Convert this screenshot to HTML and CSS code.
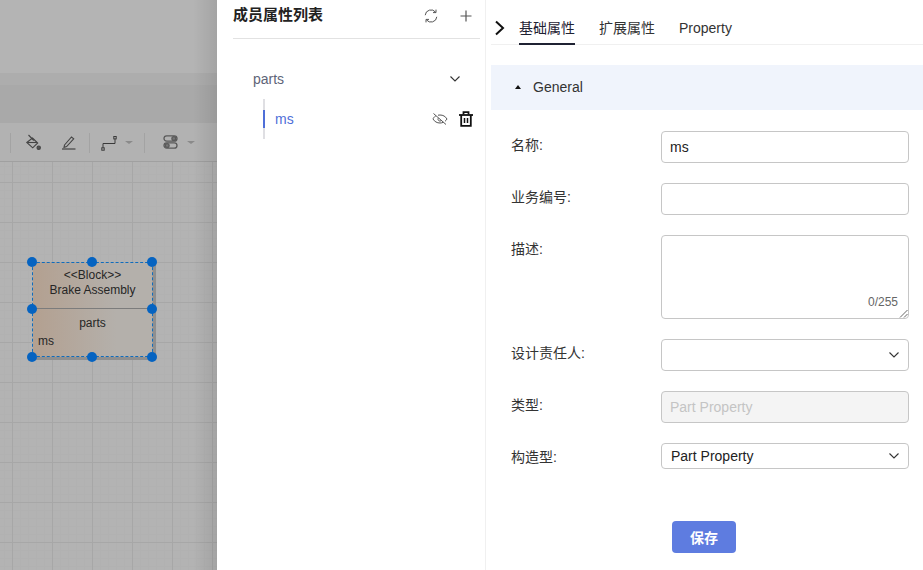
FILE: index.html
```html
<!DOCTYPE html>
<html lang="zh">
<head>
<meta charset="utf-8">
<title>成员属性列表</title>
<link rel="stylesheet" href="styles.css">
</head>
<body>
<div class="app">
  <section class="editor">
    <div class="band-top"></div>
    <div class="band-mid"></div>
    <div class="band-low"></div>
    <div class="toolbar">
      <span class="sep sep-first"></span>
      <svg class="tool tool-fill" width="15" height="16" viewBox="0 0 15 16" fill="none" stroke="#444" stroke-width="1.100"><path d="M.8 8.500 6.500 4l5.200 5-5 4.800z"/><path d="M2.500 1 7.800 6.500"/><path d="M1.500 8.500h9.500"/><circle cx="12.700" cy="13.700" r="1.700" fill="#555"/></svg>
      <svg class="tool tool-pen" width="15" height="15" viewBox="0 0 15 15" fill="none" stroke="#444" stroke-width="1.100"><path d="m3.500 10 7-8 2.200 1.800L5.600 11.600l-2.600.8z"/><path d="M1 14h13.500" stroke-width="1.200"/></svg>
      <span class="sep sep-a"></span>
      <svg class="tool tool-route" width="16" height="16" viewBox="0 0 16 16" fill="none" stroke="#3a3a3a" stroke-width="1"><rect x=".8" y="11.800" width="2.400" height="2.400"/><rect x="12.800" y=".5" width="2.400" height="2.400"/><path d="M2 11.800V7.500H14V3"/></svg>
      <span class="caret caret-a"></span>
      <span class="sep sep-b"></span>
      <svg class="tool tool-toggle" width="15" height="14" viewBox="0 0 15 14" fill="none" stroke="#5a5a5a" stroke-width="1.300"><rect x="1" y=".8" width="13" height="5.400" rx="2.700"/><rect x="1" y="7.800" width="13" height="5.400" rx="2.700"/><circle cx="10.800" cy="3.500" r="1.900" fill="#777"/><circle cx="4.200" cy="10.500" r="1.900" fill="#777"/></svg>
      <span class="caret caret-b"></span>
    </div>
    <div class="canvas">
      <div class="node">
        <div class="node-head">
          <span class="node-line">&lt;&lt;Block&gt;&gt;</span>
          <span class="node-line">Brake Assembly</span>
        </div>
        <div class="node-body">
          <span class="node-parts">parts</span>
          <span class="node-ms">ms</span>
        </div>
        <i class="handle h-tl"></i><i class="handle h-tm"></i><i class="handle h-tr"></i>
        <i class="handle h-ml"></i><i class="handle h-mr"></i>
        <i class="handle h-bl"></i><i class="handle h-bm"></i><i class="handle h-br"></i>
      </div>
    </div>
    <div class="edge-shade"></div>
  </section>

  <aside class="members">
    <header class="members-head">
      <h2 class="members-title">成员属性列表</h2>
      <svg class="head-icon icon-refresh" width="16" height="16" viewBox="0 0 16 16" fill="none" stroke="#555" stroke-width="1"><path d="M2.200 7.200A5.800 5.800 0 0 1 12.600 4.200"/><path d="M13.800 8.800A5.800 5.800 0 0 1 3.400 11.800"/><path d="M13 1.600v3h-3"/><path d="M3 14.400v-3h3"/></svg>
      <svg class="head-icon icon-plus" width="14" height="14" viewBox="0 0 14 14" fill="none" stroke="#555" stroke-width="1.200"><path d="M7 1.500v11M1.500 7h11"/></svg>
    </header>
    <div class="group-row">
      <span class="group-name">parts</span>
      <svg class="chev" width="12" height="8" viewBox="0 0 12 8" fill="none" stroke="#333" stroke-width="1.100"><path d="m1.500 1.500 4.500 4.500 4.500-4.500"/></svg>
    </div>
    <div class="group-items">
      <div class="item-row">
        <span class="item-name">ms</span>
        <svg class="item-eye" width="16" height="14" viewBox="0 0 16 14" fill="none" stroke="#555" stroke-width="1"><path d="M3.800 3.900C1.900 5 1.200 6.300 1 7c1.600 2.700 4 4 7 4 1.200 0 2.300-.2 3.300-.7"/><path d="M6 3.200C6.600 3.100 7.300 3 8 3c3 0 5.400 1.300 7 4-.5.900-1.200 1.700-2 2.300"/><path d="M1.500 1.500 14 12.500"/><path d="M6.200 6.200a2 2 0 0 0 2.800 2.600"/></svg>
        <svg class="item-trash" width="14" height="16" viewBox="0 0 14 16" fill="none" stroke="#111" stroke-width="1.800"><path d="M0 4h14"/><path d="M4.500 3.500V1.200h5V3.500"/><path d="M2.200 4v10.800h9.600V4"/><path d="M5.500 7v5M8.500 7v5" stroke-width="1.500"/></svg>
      </div>
    </div>
  </aside>

  <main class="props">
    <nav class="tabs">
      <svg class="collapse" width="12" height="16" viewBox="0 0 12 16" fill="none" stroke="#111" stroke-width="2"><path d="m2 1.500 7 6.500-7 6.500"/></svg>
      <span class="tab tab-active">基础属性</span>
      <span class="tab">扩展属性</span>
      <span class="tab">Property</span>
    </nav>
    <div class="section-bar">
      <span class="tri"></span>
      <span class="section-name">General</span>
    </div>
    <form class="form">
      <div class="field">
        <label class="label">名称:</label>
        <div class="box box-h">ms</div>
      </div>
      <div class="field">
        <label class="label">业务编号:</label>
        <div class="box box-h"></div>
      </div>
      <div class="field">
        <label class="label">描述:</label>
        <div class="box box-area">
          <span class="counter">0/255</span>
          <svg class="grip" width="9" height="9" viewBox="0 0 9 9" fill="none" stroke="#666" stroke-width="1"><path d="M1 8.500 8.500 1M5 8.500 8.500 5"/></svg>
        </div>
      </div>
      <div class="field">
        <label class="label">设计责任人:</label>
        <div class="box box-sel">
          <svg class="chev" width="12" height="8" viewBox="0 0 12 8" fill="none" stroke="#333" stroke-width="1.100"><path d="m1.500 1.500 4.500 4.500 4.500-4.500"/></svg>
        </div>
      </div>
      <div class="field">
        <label class="label">类型:</label>
        <div class="box box-h box-off">Part Property</div>
      </div>
      <div class="field">
        <label class="label">构造型:</label>
        <div class="box box-sel box-short">Part Property
          <svg class="chev" width="12" height="8" viewBox="0 0 12 8" fill="none" stroke="#333" stroke-width="1.100"><path d="m1.500 1.500 4.500 4.500 4.500-4.500"/></svg>
        </div>
      </div>
    </form>
    <div class="actions"><button class="save" type="button">保存</button></div>
  </main>
</div>
</body>
</html>
```
FILE: styles.css
```css
* { box-sizing: border-box; }
html, body { margin: 0; height: 100%; overflow: hidden; background: #fff; }
body { font-family: "Liberation Sans", "Noto Sans CJK SC", sans-serif; font-size: 14px; color: #222; }
.app { display: flex; width: 923px; height: 570px; }

/* dimmed editor */
.editor { position: relative; width: 217px; flex: none; display: flex; flex-direction: column; background: #b3b3b3; overflow: hidden; }
.band-top { height: 73px; background: #b4b4b4; }
.band-mid { height: 12px; background: #adadad; }
.band-low { height: 38px; background: #a9a9a9; }
.toolbar { position: relative; height: 39px; background: #b2b2b2; border-bottom: 1px solid #a0a0a0; }
.sep { position: absolute; top: 10px; width: 1px; height: 20px; background: #a3a3a3; }
.sep-first { left: 10px; }
.sep-a { left: 89px; }
.sep-b { left: 144px; }
.tool { position: absolute; }
.tool-fill { left: 26px; top: 11px; }
.tool-pen { left: 61px; top: 12px; }
.tool-route { left: 101px; top: 13px; }
.tool-toggle { left: 163px; top: 12px; }
.caret { position: absolute; top: 18px; border: 4px solid transparent; border-top: 3px solid #8a8a8a; border-bottom: 0; }
.caret-a { left: 125px; }
.caret-b { left: 187px; }
.canvas {
  position: relative; flex: 1;
  background-color: #b3b3b3;
  background-image:
    linear-gradient(#a7a7a7 1px, transparent 1px),
    linear-gradient(90deg, #a7a7a7 1px, transparent 1px),
    linear-gradient(#b1b1b1 1px, transparent 1px),
    linear-gradient(90deg, #b1b1b1 1px, transparent 1px);
  background-size: 40px 40px, 40px 40px, 8px 8px, 8px 8px;
  background-position: 0 20px, 12px 0, 0 4px, 4px 0;
}
.edge-shade { position: absolute; top: 0; right: 0; bottom: 0; width: 24px; background: linear-gradient(90deg, rgba(0,0,0,0), rgba(0,0,0,.09)); }

/* diagram node */
.node { position: absolute; left: 32px; top: 100px; width: 121px; height: 95px; border: 1px dashed #0f6cbd; background: linear-gradient(90deg, #b3a090, #b4b0ab 70%); box-shadow: 3px 3px 0 #8f8f8f; font-size: 12px; line-height: 14px; color: #262626; }
.node-head { height: 46px; padding-top: 5px; border-bottom: 1px solid #7c7c7c; display: flex; flex-direction: column; align-items: center; }
.node-line { display: block; white-space: nowrap; }
.node-line + .node-line { margin-top: 1px; }
.node-body { position: relative; text-align: center; padding-top: 7px; }
.node-ms { position: absolute; left: 5px; top: 25px; }
.handle { position: absolute; width: 10px; height: 10px; border-radius: 50%; background: #0563c1; }
.h-tl { left: -6px; top: -6px; } .h-tm { left: 54px; top: -6px; } .h-tr { left: 114px; top: -6px; }
.h-ml { left: -6px; top: 41px; } .h-mr { left: 114px; top: 41px; }
.h-bl { left: -6px; top: 89px; } .h-bm { left: 54px; top: 89px; } .h-br { left: 114px; top: 89px; }

/* members list */
.members { width: 269px; flex: none; border-right: 1px solid #f0f0f0; padding: 0 5px 0 16px; display: flex; flex-direction: column; }
.members-head { height: 39px; display: flex; align-items: flex-start; border-bottom: 1px solid #e2e2e2; }
.members-title { margin: 6px 0 0; font-size: 15px; line-height: 18px; font-weight: 700; color: #222; flex: 1; }
.head-icon { flex: none; }
.icon-refresh { margin: 8px 0 0; }
.icon-plus { margin: 9px 7px 0 20px; }
.group-row { display: flex; align-items: center; justify-content: space-between; height: 20px; margin-top: 30px; padding: 0 19px 0 20px; }
.group-name { font-size: 14px; color: #5e6478; }
.group-items { margin: 10px 0 0 30px; height: 40px; border-left: 2px solid #dfdfe3; display: flex; align-items: center; }
.item-row { position: relative; flex: 1; height: 20px; display: flex; align-items: center; padding: 0 7px 0 10px; }
.item-row::before { content: ""; position: absolute; left: -2px; top: 1px; width: 2px; height: 18px; background: #4f6fd8; }
.item-name { flex: 1; color: #4f6fd8; font-size: 14px; }
.item-trash { margin-left: 11px; }

/* form panel */
.props { flex: 1; min-width: 0; display: flex; flex-direction: column; padding-left: 5px; }
.tabs { display: flex; align-items: flex-start; height: 45px; border-bottom: 1px solid #f0f0f0; padding-left: 3px; }
.collapse { margin: 20px 13px 0 0; }
.tab { height: 45px; padding-top: 20px; margin-right: 24px; font-size: 14px; line-height: 17px; color: #333; }
.tab-active { color: #1f2233; border-bottom: 2px solid #1f2233; }
.section-bar { height: 45px; margin-top: 20px; background: #f0f4fc; display: flex; align-items: center; padding: 0 0 2px 24px; }
.tri { width: 0; height: 0; border: 3.5px solid transparent; border-bottom: 4px solid #111; border-top: 0; margin-right: 12px; }
.section-name { font-size: 14px; color: #333; }
.form { display: flex; flex-direction: column; gap: 20px; padding: 21px 14px 0 20px; }
.field { display: flex; align-items: flex-start; }
.label { width: 150px; flex: none; padding-top: 5px; line-height: 18px; font-size: 14px; color: #333; }
.box { position: relative; flex: 1; border: 1px solid #c6c6c6; border-radius: 4px; background: #fff; padding-left: 8px; font-size: 14px; color: #222; }
.box-h { height: 32px; line-height: 31px; }
.box-area { height: 84px; }
.box-sel { height: 32px; line-height: 24px; }
.box-short { height: 26px; padding-left: 9px; }
.box-off { background: #f4f4f4; color: #c4c4c4; }
.box-sel .chev { position: absolute; right: 8px; top: 50%; margin-top: -4px; }
.counter { position: absolute; right: 10px; bottom: 9px; font-size: 12px; line-height: 14px; color: #666; }
.grip { position: absolute; right: 0; bottom: 0; }
.actions { margin-top: 52px; padding-left: 181px; }
.save { width: 64px; height: 32px; border: 0; border-radius: 4px; background: #5e7ce0; color: #fff; font: 700 14px "Liberation Sans", "Noto Sans CJK SC", sans-serif; }
```
